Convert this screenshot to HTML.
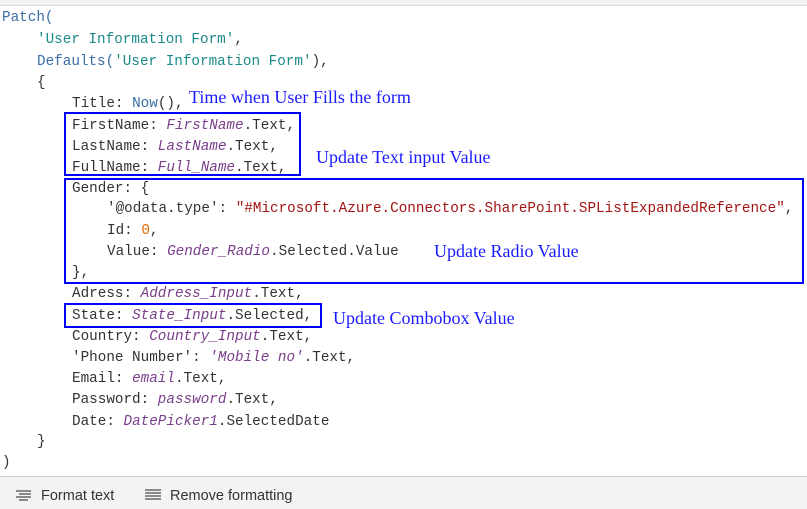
<!DOCTYPE html>
<html><head><style>
body{margin:0;width:807px;height:508px;background:#fff;position:relative;overflow:hidden;font-family:"Liberation Mono",monospace;}
.top{position:absolute;left:0;top:0;width:807px;height:5px;background:#f3f3f3;border-bottom:1px solid #d8d8d8;}
.l{position:absolute;font-size:14.3px;color:#333;white-space:pre;line-height:20px;margin-top:2px;}
.b{color:#3a6ea5}.s{color:#1a8a8a}.v{color:#7a3e8a;font-style:italic}.r{color:#a31515}.n{color:#d86a00}
.box{position:absolute;border:2px solid #0000ff;box-sizing:border-box;}
.a{position:absolute;font-family:"Liberation Serif",serif;font-size:18px;color:#1a1aff;white-space:nowrap;line-height:20px;}
.foot{position:absolute;left:0;top:476px;width:807px;height:32px;background:#f3f3f3;border-top:1px solid #d0d0d0;font-family:"Liberation Sans",sans-serif;font-size:14.5px;color:#333;}
</style></head><body>
<div class="top"></div>
<div class="l" style="left:2px;top:6px"><span class="b">Patch(</span></div>
<div class="l" style="left:37px;top:28px"><span class="s">'User Information Form'</span>,</div>
<div class="l" style="left:37px;top:50px"><span class="b">Defaults(</span><span class="s">'User Information Form'</span>),</div>
<div class="l" style="left:37px;top:71px">{</div>
<div class="l" style="left:72px;top:92px">Title: <span class="b">Now</span>(),</div>
<div class="l" style="left:72px;top:114px">FirstName: <span class="v">FirstName</span>.Text,</div>
<div class="l" style="left:72px;top:135px">LastName: <span class="v">LastName</span>.Text,</div>
<div class="l" style="left:72px;top:156px">FullName: <span class="v">Full_Name</span>.Text,</div>
<div class="l" style="left:72px;top:177px">Gender: {</div>
<div class="l" style="left:107px;top:197px">'@odata.type': <span class="r">"#Microsoft.Azure.Connectors.SharePoint.SPListExpandedReference"</span>,</div>
<div class="l" style="left:107px;top:219px">Id: <span class="n">0</span>,</div>
<div class="l" style="left:107px;top:240px">Value: <span class="v">Gender_Radio</span>.Selected.Value</div>
<div class="l" style="left:72px;top:261px">},</div>
<div class="l" style="left:72px;top:282px">Adress: <span class="v">Address_Input</span>.Text,</div>
<div class="l" style="left:72px;top:304px">State: <span class="v">State_Input</span>.Selected,</div>
<div class="l" style="left:72px;top:325px">Country: <span class="v">Country_Input</span>.Text,</div>
<div class="l" style="left:72px;top:346px">'Phone Number': <span class="v">'Mobile no'</span>.Text,</div>
<div class="l" style="left:72px;top:367px">Email: <span class="v">email</span>.Text,</div>
<div class="l" style="left:72px;top:388px">Password: <span class="v">password</span>.Text,</div>
<div class="l" style="left:72px;top:410px">Date: <span class="v">DatePicker1</span>.SelectedDate</div>
<div class="l" style="left:37px;top:430px">}</div>
<div class="l" style="left:2px;top:451px">)</div>
<div class="box" style="left:64px;top:112px;width:237px;height:64px"></div>
<div class="box" style="left:64px;top:178px;width:740px;height:106px"></div>
<div class="box" style="left:64px;top:303px;width:258px;height:25px"></div>
<div class="a" style="left:189px;top:87px">Time when User Fills the form</div>
<div class="a" style="left:316px;top:147px">Update Text input Value</div>
<div class="a" style="left:434px;top:241px">Update Radio Value</div>
<div class="a" style="left:333px;top:308px">Update Combobox Value</div>
<div class="foot">
<svg style="position:absolute;left:16px;top:13px" width="16" height="11"><g stroke="#444" stroke-width="1.2"><line x1="0" y1="1" x2="15" y2="1"/><line x1="3" y1="4" x2="15" y2="4"/><line x1="0" y1="7" x2="15" y2="7"/><line x1="3" y1="10" x2="12" y2="10"/></g></svg>
<span style="position:absolute;left:41px;top:11px">Format text</span>
<svg style="position:absolute;left:145px;top:12px" width="16" height="12"><g stroke="#444" stroke-width="1.2"><line x1="0" y1="1" x2="16" y2="1"/><line x1="0" y1="4" x2="16" y2="4"/><line x1="0" y1="7" x2="16" y2="7"/><line x1="0" y1="10" x2="16" y2="10"/></g></svg>
<span style="position:absolute;left:170px;top:11px">Remove formatting</span>
</div>
</body></html>
